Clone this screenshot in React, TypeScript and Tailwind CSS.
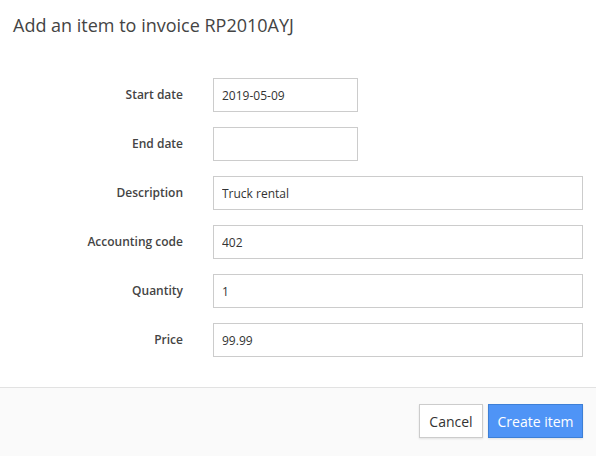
const fields = [
  { label: 'Start date', value: '2019-05-09', short: true },
  { label: 'End date', value: '', short: true },
  { label: 'Description', value: 'Truck rental' },
  { label: 'Accounting code', value: '402' },
  { label: 'Quantity', value: '1' },
  { label: 'Price', value: '99.99' },
];

export default function App() {
  return (
    <div className="w-[596px] h-[456px] bg-white flex flex-col font-['Open_Sans',sans-serif] text-[#333]">
      <h1 className="px-[13px] pt-[13px] text-[18px] leading-[24px] text-[#444]">Add an item to invoice RP2010AYJ</h1>

      <div className="flex flex-col gap-[15px] pt-[41px] pr-[13px]">
        {fields.map((f) => (
          <div key={f.label} className="flex items-center">
            <label className="w-[183px] text-right text-[12px] font-semibold text-[#444]">{f.label}</label>
            <input
              defaultValue={f.value}
              className={
                'ml-[30px] h-[34px] border border-[#ccc] px-[8px] text-[12px] text-[#333] outline-none ' +
                (f.short ? 'w-[145px]' : 'flex-1')
              }
            />
          </div>
        ))}
      </div>

      <div className="mt-[30px] flex-1 border-t border-[#e2e2e2] bg-[#fafafa] flex justify-end gap-[5px] pt-[16px] pr-[13px]">
        <button className="h-[34px] w-[64px] border border-[#ccc] bg-white text-[14px] text-[#333] shadow-[0_1px_2px_rgba(0,0,0,0.1)]">
          Cancel
        </button>
        <button className="h-[34px] w-[95px] border border-[#3d7fd6] bg-[#4f94f6] text-[14px] text-white shadow-[0_1px_2px_rgba(0,0,0,0.1)]">
          Create item
        </button>
      </div>
    </div>
  );
}
